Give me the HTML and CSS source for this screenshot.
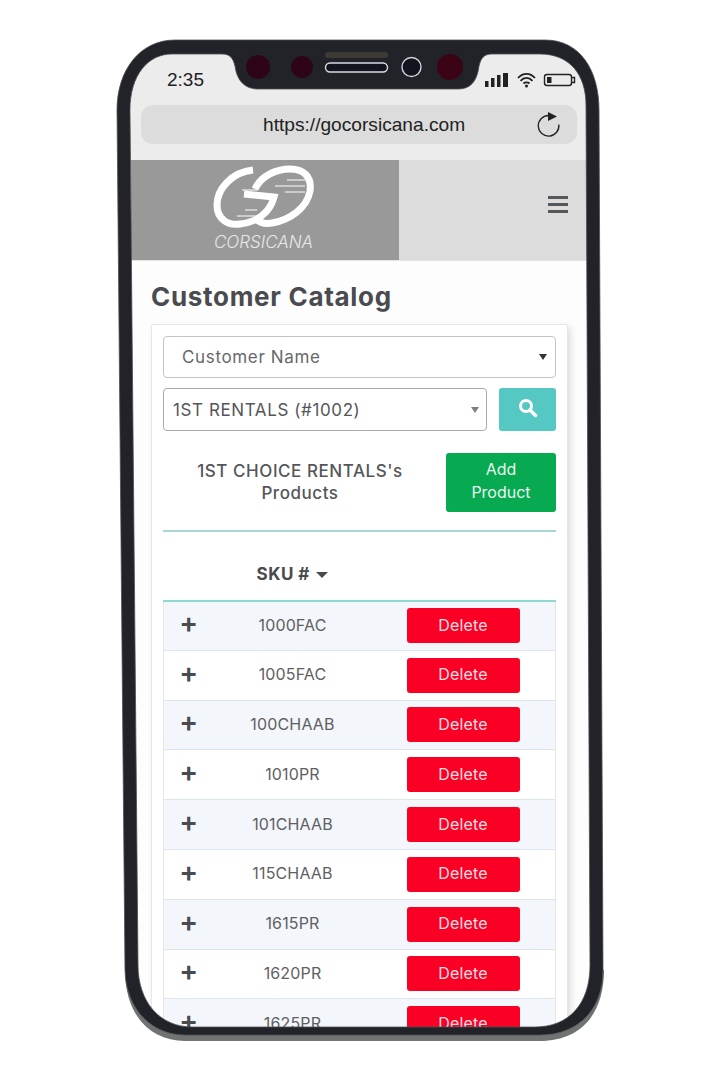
FILE: index.html

```html
<!DOCTYPE html>
<html lang="en">
<head>
  <meta charset="UTF-8" />
  <meta name="viewport" content="width=device-width, initial-scale=1.0"/>
  <title>Customer Catalog</title>
  <link rel="stylesheet" href="styles.css">
</head>
<body>
  <div class="screen">
    <div class="browser">
      <div class="status">
        <span class="time">2:35</span>
        <svg class="status-icons" width="92" height="16" viewBox="0 0 92 16">
          <rect x="0" y="9" width="3.500" height="6" fill="#222"/>
          <rect x="6" y="6" width="3.500" height="9" fill="#222"/>
          <rect x="12" y="3" width="3.500" height="12" fill="#222"/>
          <rect x="18" y="1" width="5" height="14" fill="#222"/>
          <path d="M33 6 C38 0.500 45 0.500 50 6 M35.500 8.800 C39 5 44 5 47.500 8.800 M38.500 11.500 C40 10 43 10 44.500 11.500" fill="none" stroke="#222" stroke-width="1.800"/>
          <circle cx="41.500" cy="14" r="1.500" fill="#222"/>
          <rect x="59.500" y="2.500" width="27" height="11" rx="2.500" fill="none" stroke="#222" stroke-width="1.400"/>
          <rect x="62" y="5" width="4.500" height="6" fill="#222"/>
          <path d="M87 5.500 h2.500 v5 h-2.500" fill="none" stroke="#222" stroke-width="1.400"/>
        </svg>
      </div>
      <div class="url-bar">
        <span class="url">https://gocorsicana.com</span>
        <svg class="reload" width="26" height="28" viewBox="0 0 26 28">
          <path d="M13.500 4.500 A10.300 10.300 0 1 0 23.800 13.500" fill="none" stroke="#222" stroke-width="1.300"/>
          <path d="M13 1 L22 5.500 L13 10 Z" fill="#222"/>
        </svg>
      </div>
    </div>

    <header class="site-header">
      <div class="logo">
        <svg width="110" height="66" viewBox="0 0 110 66">
          <g fill="none" stroke="#fff" stroke-width="7">
            <path d="M45 6 C24 8 9 25 9 41 C9 55 20 62 32 60 C50 58 62 48 66 33 L36 30"/>
            <path d="M47 25 C53 12 68 5 82 5 C96 5 104 13 102 27 C99 44 82 56 64 59 C58 60 52 59 48 55"/>
          </g>
          <g fill="none" stroke="#fff" stroke-width="1">
            <path d="M79 16 H97 M67 22 H97 M77 28 H97 M34 26 H49 M37 46 H49 M29 52 H49"/>
          </g>
        </svg>
        <span class="logo-text">CORSICANA</span>
      </div>
      <div class="menu-side">
        <div class="hamburger"><span></span><span></span><span></span></div>
      </div>
    </header>

    <main>
      <h1>Customer Catalog</h1>
      <div class="card">
        <div class="field field-name">Customer Name<i class="arrow arrow-dark"></i></div>
        <div class="search-row">
          <div class="field field-customer">1ST RENTALS (#1002)<i class="arrow"></i></div>
          <button class="btn-search">
            <svg width="20" height="20" viewBox="0 0 20 20">
              <circle cx="8" cy="8" r="5.500" fill="none" stroke="#fff" stroke-width="3"/>
              <path d="M12 12 L17.500 17.500" stroke="#fff" stroke-width="3.500" stroke-linecap="round"/>
            </svg>
          </button>
        </div>
        <div class="products-head">
          <div class="products-title">1ST CHOICE RENTALS's<br>Products</div>
          <button class="btn-add">Add<br>Product</button>
        </div>
        <table class="sku-table">
          <thead>
            <tr><th></th><th>SKU # <i class="sort"></i></th><th></th></tr>
          </thead>
          <tbody>
            <tr><td class="plus">+</td><td>1000FAC</td><td><button class="btn-delete">Delete</button></td></tr>
            <tr><td class="plus">+</td><td>1005FAC</td><td><button class="btn-delete">Delete</button></td></tr>
            <tr><td class="plus">+</td><td>100CHAAB</td><td><button class="btn-delete">Delete</button></td></tr>
            <tr><td class="plus">+</td><td>1010PR</td><td><button class="btn-delete">Delete</button></td></tr>
            <tr><td class="plus">+</td><td>101CHAAB</td><td><button class="btn-delete">Delete</button></td></tr>
            <tr><td class="plus">+</td><td>115CHAAB</td><td><button class="btn-delete">Delete</button></td></tr>
            <tr><td class="plus">+</td><td>1615PR</td><td><button class="btn-delete">Delete</button></td></tr>
            <tr><td class="plus">+</td><td>1620PR</td><td><button class="btn-delete">Delete</button></td></tr>
            <tr><td class="plus">+</td><td>1625PR</td><td><button class="btn-delete">Delete</button></td></tr>
          </tbody>
        </table>
      </div>
    </main>
  </div>

  <!-- phone body sits over the page, its sides lean a little -->
  <svg class="phone" width="720" height="1080" viewBox="0 0 720 1080">
    <path fill="#fff" fill-rule="evenodd" d="M0 0 H720 V1080 H0 Z M175 40 H545 C580 40 599 70 599 110 L604 970 C604 1015 580 1041 540 1041 H185 C150 1041 125 1015 125 970 L117 110 C117 70 140 40 175 40 Z"/>
    <path fill="#6f7472" d="M125 970 C125 1015 150 1041 185 1041 H540 C580 1041 604 1015 604 970 L603 970 C603 1010 578 1035 540 1035 H185 C152 1035 126 1010 125 970 Z"/>
    <path fill="#222328" stroke="#4c4e52" stroke-width="0.800" fill-rule="evenodd" d="M175 40 H545 C580 40 599 70 599 110 L603 970 C603 1010 578 1035 540 1035 H185 C152 1035 126 1010 125 970 L117 110 C117 70 140 40 175 40 Z M172 54 C148 54 130 75 130 110 L138 965 C138 1002 160 1027 192 1027 H535 C568 1027 590 1005 590 965 L586 105 C586 75 570 54 540 54 H492 C484 54 481 58 479 66 C477 82 470 89 458 89 H258 C246 89 237 82 235 66 C233 58 230 54 222 54 Z"/>
    <rect x="325" y="52" width="63" height="6" rx="3" fill="#3d3934"/>
    <circle cx="258" cy="67" r="12" fill="#2e0418"/>
    <circle cx="302" cy="67" r="11" fill="#2e0418"/>
    <circle cx="450" cy="67" r="13" fill="#3a0316"/>
    <rect x="325.500" y="63" width="62" height="9" rx="4.500" fill="#14141f" stroke="#d8dce4" stroke-width="1.400"/>
    <circle cx="411.500" cy="67" r="9.500" fill="#14141f" stroke="#ccd2dc" stroke-width="1.400"/>
  </svg>
</body>
</html>
```

FILE: styles.css

```css
body {
  margin: 0;
  height: 1080px;
  overflow: hidden;
  background: #fff;
  font-family: "Inter", "Liberation Sans", sans-serif;
  color: #55565a;
}
button {
  border: 0;
  font-family: inherit;
  padding: 0;
}
.phone {
  position: absolute;
  top: 0;
  left: 0;
}
.screen {
  width: 459px;
  height: 974px;
  margin: 53px 0 0 131px;
  float: left;
  overflow: hidden;
  background: #fdfdfd;
}
.browser {
  height: 107px;
  background: #ececec;
  font-family: "Liberation Sans", Arial, sans-serif;
  color: #222;
}
.status {
  height: 52px;
  display: flex;
  align-items: center;
  justify-content: space-between;
  padding: 0 13px 0 36px;
  box-sizing: border-box;
}
.time {
  font-size: 19px;
  margin-top: 2px;
}
.status-icons {
  margin-top: 2px;
}
.url-bar {
  height: 39px;
  margin: 0 10px;
  width: 436px;
  border-radius: 12px;
  background: #dcdcdc;
  display: flex;
  align-items: center;
  justify-content: space-between;
  padding: 0 16px 0 122px;
  box-sizing: border-box;
}
.url {
  font-size: 19.150px;
}

.site-header {
  height: 101px;
  display: flex;
  border-bottom: 1px solid #e4e4e4;
  box-sizing: border-box;
}
.logo {
  width: 268px;
  background: #999;
  display: flex;
  flex-direction: column;
  align-items: center;
  padding-top: 4px;
  box-sizing: border-box;
}
.logo svg {
  display: block;
  margin-left: -4px;
}
.logo-text {
  font-size: 17px;
  font-style: italic;
  font-weight: 300;
  color: #e8e8e8;
  margin-top: 2px;
  margin-left: -3px;
}
.menu-side {
  flex: 1;
  background: #dcdcdc;
  display: flex;
  align-items: center;
  justify-content: flex-end;
  padding-right: 22px;
}
.hamburger {
  display: flex;
  flex-direction: column;
  gap: 4px;
  margin-bottom: 12px;
}
.hamburger span {
  display: block;
  width: 20px;
  height: 3px;
  background: #55585a;
}

main {
  padding: 0 0 0 20px;
}
h1 {
  margin: 0;
  padding-top: 21px;
  font-size: 26px;
  line-height: 30px;
  font-weight: 700;
  color: #4a4b4f;
  letter-spacing: 0.700px;
}
.card {
  width: 417px;
  margin-top: 12px;
  padding: 11px 11px 0;
  box-sizing: border-box;
  background: #fff;
  border: 1px solid #e6e6e6;
  border-radius: 2px;
  box-shadow: 3px 3px 6px rgba(0, 0, 0, 0.12);
}
.field {
  position: relative;
  display: flex;
  align-items: center;
  height: 43px;
  box-sizing: border-box;
  border: 1px solid #c4c4c4;
  border-radius: 4px;
  font-size: 17px;
}
.field-name {
  width: 393px;
  height: 42px;
  padding-left: 18px;
  color: #66686b;
  letter-spacing: 0.650px;
}
.field-customer {
  width: 324px;
  padding-left: 9px;
  border-color: #aaa;
  color: #55565a;
  letter-spacing: 0.600px;
}
.arrow {
  position: absolute;
  right: 7px;
  top: 18px;
  border: 4px solid transparent;
  border-top: 6px solid #7f7f7f;
  border-bottom: 0;
}
.arrow-dark {
  right: 8px;
  top: 17px;
  border-top-color: #333;
}
.search-row {
  display: flex;
  justify-content: space-between;
  width: 393px;
  margin-top: 10px;
}
.btn-search {
  width: 57px;
  height: 43px;
  background: #56c8c4;
  border-radius: 3px;
  display: flex;
  align-items: center;
  justify-content: center;
  padding-bottom: 3px;
}
.products-head {
  display: flex;
  justify-content: space-between;
  align-items: center;
  width: 393px;
  height: 59px;
  margin-top: 22px;
  padding-bottom: 18px;
  border-bottom: 2px solid #a8d6d4;
}
.products-title {
  width: 274px;
  text-align: center;
  font-size: 17px;
  line-height: 22px;
  font-weight: 500;
  color: #55565a;
  letter-spacing: 0.550px;
  margin-top: -1px;
}
.btn-add {
  width: 110px;
  height: 59px;
  background: #07a951;
  border-radius: 3px;
  color: #e9f7ef;
  font-size: 16px;
  line-height: 23px;
  padding-bottom: 4px;
}
.sku-table {
  width: 393px;
  border-collapse: collapse;
  table-layout: fixed;
  font-size: 16px;
}
.sku-table th:first-child {
  width: 50px;
}
.sku-table th:nth-child(2) {
  width: 158px;
}
.sku-table thead tr {
  height: 68.500px;
  border-bottom: 2px solid #8fd8d2;
}
.sku-table th {
  padding: 17px 0 0;
  font-size: 17px;
  font-weight: 700;
  color: #4a4b4f;
  letter-spacing: 0.500px;
}
.sort {
  display: inline-block;
  vertical-align: middle;
  border: 6px solid transparent;
  border-top: 6px solid #4a4b4f;
  border-bottom: 0;
  margin: 0 0 2px 2px;
}
.sku-table tbody tr {
  height: 49.800px;
  border-bottom: 1px solid #dfe5ec;
}
.sku-table tbody tr:nth-child(odd) {
  background: #f3f6fa;
}
.sku-table td {
  padding: 0 0 2px;
  text-align: center;
  color: #5f6063;
  letter-spacing: 0.150px;
}
.sku-table tbody {
  border-left: 1px solid #e6e6e6;
  border-right: 1px solid #e6e6e6;
}
.sku-table td.plus {
  font-size: 28px;
  font-weight: 600;
  line-height: 28px;
  color: #4a4b4f;
  padding-bottom: 5px;
}
.sku-table td:last-child {
  text-align: left;
  padding: 0 0 0 35px;
}
.btn-delete {
  display: block;
  width: 113px;
  height: 35px;
  background: #fb0025;
  border-radius: 3px;
  color: #f8dfe2;
  font-size: 16px;
  letter-spacing: 0.200px;
  padding-bottom: 2px;
}
```
